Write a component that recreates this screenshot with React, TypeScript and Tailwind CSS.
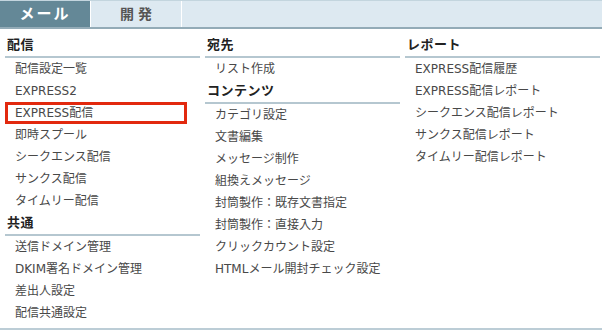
type Section = { title: string; items: string[] };

const columns: Section[][] = [
  [
    {
      title: "配信",
      items: [
        "配信設定一覧",
        "EXPRESS2",
        "EXPRESS配信",
        "即時スプール",
        "シークエンス配信",
        "サンクス配信",
        "タイムリー配信",
      ],
    },
    {
      title: "共通",
      items: ["送信ドメイン管理", "DKIM署名ドメイン管理", "差出人設定", "配信共通設定"],
    },
  ],
  [
    { title: "宛先", items: ["リスト作成"] },
    {
      title: "コンテンツ",
      items: [
        "カテゴリ設定",
        "文書編集",
        "メッセージ制作",
        "組換えメッセージ",
        "封筒製作：既存文書指定",
        "封筒製作：直接入力",
        "クリックカウント設定",
        "HTMLメール開封チェック設定",
      ],
    },
  ],
  [
    {
      title: "レポート",
      items: [
        "EXPRESS配信履歴",
        "EXPRESS配信レポート",
        "シークエンス配信レポート",
        "サンクス配信レポート",
        "タイムリー配信レポート",
      ],
    },
  ],
];

export default function App() {
  return (
    <div
      className="w-[602px] h-[331px] bg-white overflow-hidden"
      style={{ fontFamily: '"DejaVu Sans", "Noto Sans CJK JP", sans-serif' }}
    >
      <div className="flex h-[29px] bg-[#dde9f1] border-t border-[#c3d5de] border-b-2 border-b-[#93abb7]">
        <div className="w-[90px] bg-[#648897] flex items-center justify-center text-white font-bold text-[15px] tracking-[2px]">
          メール
        </div>
        <div className="w-[92px] border-l border-r border-white flex items-center justify-center text-[#555] font-bold text-[14px] tracking-[4px] pl-[4px]">
          開発
        </div>
        <div className="flex-1" />
      </div>
      <div className="flex h-[301px] pt-[5px] border-b-2 border-[#bccdd6]">
        {columns.map((sections, ci) => (
          <div key={ci} className="w-[195px] ml-[5px]">
            {sections.map((s) => (
              <div key={s.title}>
                <div className="h-[24px] leading-[22px] pl-[2px] text-[13px] font-bold tracking-[0.5px] text-[#222] border-b-2 border-[#b5c7d0]">
                  {s.title}
                </div>
                {s.items.map((item) => (
                  <div
                    key={item}
                    className="relative h-[22px] leading-[22px] pl-[10px] text-[12px] text-[#484848] whitespace-nowrap"
                  >
                    {item}
                    {item === "EXPRESS配信" && (
                      <span className="absolute left-0 top-0 w-[182px] h-[22px] border-[3px] border-[#e2290e]" />
                    )}
                  </div>
                ))}
              </div>
            ))}
          </div>
        ))}
      </div>
    </div>
  );
}
